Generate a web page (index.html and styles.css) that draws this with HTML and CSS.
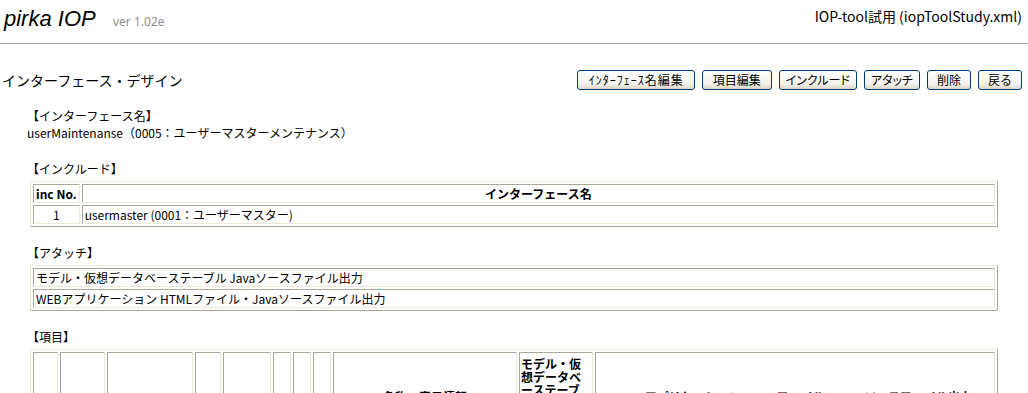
FILE: index.html
```html
<!DOCTYPE html>
<html lang="ja">
  <head>
    <meta charset="UTF-8">
    <title>pirka IOP - インターフェース・デザイン</title>
    <link rel="stylesheet" href="styles.css">
  </head>
  <body>
    <div class="header">
      <div class="logo">pirka IOP <span class="version">ver 1.02e</span></div>
      <div class="project">IOP-tool試用 (iopToolStudy.xml)</div>
    </div>
    <hr class="rule">

    <div class="titlebar">
      <h1>インターフェース・デザイン</h1>
      <div class="buttons">
        <button class="btn btn-wide">ｲﾝﾀｰﾌｪｰｽ名編集</button>
        <button class="btn">項目編集</button>
        <button class="btn btn-kana">インクルード</button>
        <button class="btn btn-kana">アタッチ</button>
        <button class="btn btn-short">削除</button>
        <button class="btn btn-short">戻る</button>
      </div>
    </div>

    <div class="content">
      <div class="section">
        <div class="label">【インターフェース名】</div>
        <div class="name">userMaintenanse（0005：ユーザーマスターメンテナンス）</div>
      </div>

      <div class="section">
        <div class="label">【インクルード】</div>
        <table class="grid">
          <tr>
            <th class="col-no">inc No.</th>
            <th>インターフェース名</th>
          </tr>
          <tr>
            <td class="center">1</td>
            <td>usermaster (0001：ユーザーマスター)</td>
          </tr>
        </table>
      </div>

      <div class="section">
        <div class="label">【アタッチ】</div>
        <table class="grid">
          <tr><td>モデル・仮想データベーステーブル Javaソースファイル出力</td></tr>
          <tr><td>WEBアプリケーション HTMLファイル・Javaソースファイル出力</td></tr>
        </table>
      </div>

      <div class="section">
        <div class="label">【項目】</div>
        <table class="grid items">
          <tr>
            <th class="w24"></th>
            <th class="w44"></th>
            <th class="w85"></th>
            <th class="w25"></th>
            <th class="w47"></th>
            <th class="w17"></th>
            <th class="w17"></th>
            <th class="w17"></th>
            <th class="w182">名称・表示情報</th>
            <th class="w73 top">モデル・仮想データベーステーブル Javaソースファイル出力</th>
            <th>WEBアプリケーション HTMLファイル・Javaソースファイル出力</th>
          </tr>
        </table>
      </div>
    </div>
  </body>
</html>
```

FILE: styles.css
```css
body {
  font-family: "Noto Sans CJK JP", "Noto Sans", sans-serif;
  font-size: 12px;
  line-height: 17px;
  color: #000000;
  background: #ffffff;
  margin: 0;
  padding: 0 6px 0 2px;
}

.header {
  display: flex;
  justify-content: space-between;
  align-items: flex-start;
  padding-top: 5px;
  height: 28px;
}

.logo {
  font-family: "Liberation Sans", Arial, sans-serif;
  font-style: italic;
  font-size: 22px;
  line-height: 28px;
  margin-left: 2px;
}

.version {
  font-family: "Noto Sans", sans-serif;
  font-style: normal;
  font-size: 12px;
  color: #8c8c8c;
  margin-left: 12px;
}

.project {
  font-size: 14px;
  line-height: 20px;
  margin-top: 1px;
}

.rule {
  border: none;
  border-top: 1px solid #aaa6a2;
  margin: 10px -6px 0 -2px;
}

.titlebar {
  display: flex;
  justify-content: space-between;
  align-items: center;
  margin-top: 26px;
  height: 20px;
}

h1 {
  font-size: 14px;
  font-weight: normal;
  margin: 0;
}

.buttons {
  display: flex;
  gap: 7px;
}

.btn {
  font-family: "Noto Sans CJK JP", sans-serif;
  font-size: 12px;
  height: 20px;
  line-height: 16px;
  margin: 0;
  padding: 0 10px;
  color: #000000;
  border: 1px solid #003c74;
  border-radius: 3px;
  background: linear-gradient(#ffffff, #f4f3ee 70%, #dcd8c8);
}

.btn-wide {
  letter-spacing: 1px;
  padding: 0 10px 0 11px;
}

.btn-kana {
  font-feature-settings: "palt";
  padding: 0 6px;
}

.btn-short {
  padding: 0 9px;
}

.content {
  margin: 0 24px 0 25px;
}

.section {
  margin-top: 17px;
}

.name {
  padding-bottom: 2px;
}

.grid {
  width: calc(100% - 3px);
  margin: 4px 0 0 3px;
  border-spacing: 2px;
  border: 1px solid;
  border-color: #ece9d8 #aca899 #aca899 #ece9d8;
}

.grid th,
.grid td {
  border: 1px solid;
  border-color: #aca899 #ece9d8 #ece9d8 #aca899;
  padding: 1px 2px;
  line-height: 15px;
  text-align: left;
}

.grid th {
  text-align: center;
  font-weight: bold;
}

.col-no {
  width: 45px;
  box-sizing: border-box;
  white-space: nowrap;
}

.grid .center {
  text-align: center;
}

.items {
  table-layout: fixed;
}

.items th {
  box-sizing: border-box;
  padding: 4px 1px 2px;
  line-height: 13px;
  vertical-align: middle;
}

.items th.top {
  text-align: left;
  vertical-align: top;
}

.w17 { width: 18px; }
.w24 { width: 25px; }
.w25 { width: 26px; }
.w44 { width: 45px; }
.w47 { width: 48px; }
.w73 { width: 74px; }
.w85 { width: 86px; }
.w182 { width: 184px; }
```
